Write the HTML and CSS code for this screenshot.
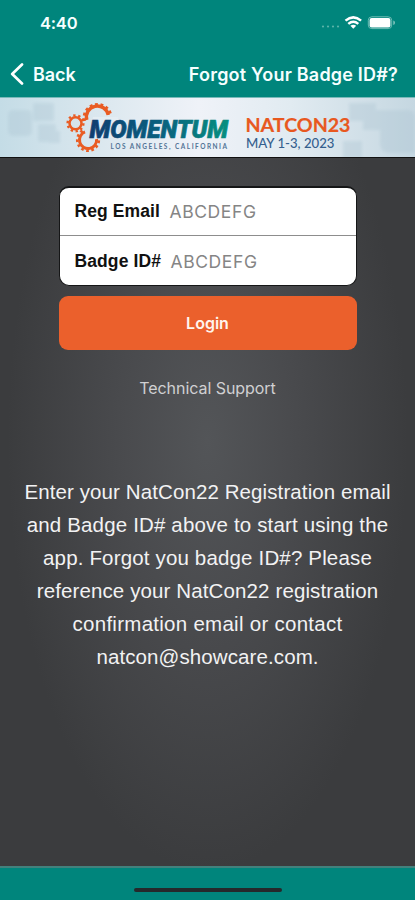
FILE: index.html
```html
<!DOCTYPE html>
<html lang="en">
<head>
<meta charset="utf-8">
<title>Forgot Your Badge ID#?</title>
<link rel="stylesheet" href="styles.css">
</head>
<body>
<div class="app">
  <header class="top">
    <div class="status">
      <span class="time">4:40</span>
      <svg class="status-icons" width="78" height="16" viewBox="0 0 78 16">
        <g fill="#5cb3a9"><circle cx="3" cy="11.5" r="1.1"/><circle cx="8" cy="11.5" r="1.1"/><circle cx="13" cy="11.5" r="1.1"/><circle cx="18" cy="11.5" r="1.1"/></g>
        <g fill="none" stroke="#fff" stroke-width="2.5"><path d="M25.500 5.600Q33.300-.9 41.100 5.600"/><path d="M28.300 8.900Q33.300 4.700 38.300 8.900"/></g>
        <path d="M30.400 10.700Q33.300 8.600 36.200 10.700L33.300 13.700Z" fill="#fff"/>
        <rect x="48.300" y="1.800" width="23.400" height="11.800" rx="3.500" fill="none" stroke="#6fbcb4"/>
        <rect x="49.600" y="3.100" width="20.800" height="9.300" rx="2" fill="#fff"/>
        <path d="M73.300 5.500Q75 6 75 7.700T73.300 9.900Z" fill="#83c5bf"/>
      </svg>
    </div>
    <nav class="nav">
      <a class="back"><svg width="14" height="22" viewBox="0 0 14 22"><path d="M12 1.500 2.200 11 12 20.500" fill="none" stroke="#fff" stroke-width="2.700" stroke-linecap="round" stroke-linejoin="round"/></svg><span>Back</span></a>
      <h1 class="title">Forgot Your Badge ID#?</h1>
    </nav>
  </header>
  <svg class="banner" width="415" height="61" viewBox="0 97 415 61">
    <defs>
      <linearGradient id="sky"><stop offset="0" stop-color="#c4dce6"/><stop offset=".25" stop-color="#dce8ef"/><stop offset=".48" stop-color="#eff2f8"/><stop offset=".7" stop-color="#e1ebf1"/><stop offset="1" stop-color="#c5d7e1"/></linearGradient>
      <linearGradient id="word" gradientUnits="userSpaceOnUse" x1="90" y1="0" x2="229" y2="0"><stop offset="0" stop-color="#103e70"/><stop offset=".5" stop-color="#09607f"/><stop offset="1" stop-color="#079080"/></linearGradient>
      <filter id="soft" x="-20%" y="-20%" width="140%" height="140%"><feGaussianBlur stdDeviation="1.500"/></filter>
    </defs>
    <rect y="97" width="415" height="61" fill="url(#sky)"/>
    <g fill="#a9c2d0" opacity=".32" filter="url(#soft)">
      <rect x="8" y="110" width="24" height="26" rx="5"/><rect x="33" y="103" width="21" height="18" rx="2"/><rect x="38" y="124" width="18" height="18" rx="3"/><rect x="49" y="131" width="11" height="12"/>
      <path d="M349 103h27v18h-27zM363 110h45q7 0 7 8v35h-25q-10 0-10-10v-13h-17zM343 141h19v17h-19z"/>
    </g>
    <path d="M0 97.500H415" stroke="#79b9b9"/>
    <g fill="none" stroke="#e95c23">
      <path d="M86.800 120A11 11 0 1 1 108.200 115" stroke-width="3.400"/><path d="M84.400 121A13.500 13.500 0 1 1 110.800 115" stroke-width="3" stroke-dasharray="2.800 2.600"/>
      <circle cx="75.500" cy="123.300" r="6" stroke-width="2.500"/><circle cx="75.500" cy="123.300" r="7.900" stroke-width="2.400" stroke-dasharray="2.300 2.663"/>
      <path d="M85 131.900A8.600 8.600 0 1 0 96.600 139" stroke-width="3"/><path d="M82.500 130.700A10.800 10.800 0 1 0 98.800 139" stroke-width="2.600" stroke-dasharray="2.600 2.620"/>
    </g>
    <path d="M93 117H118V137.500H89Z" fill="#e4edf3"/>
    <text class="momentum" x="89.500" y="137.700" textLength="138.500" lengthAdjust="spacingAndGlyphs">MOMENTUM</text>
    <text class="place" x="110.500" y="148.800" textLength="116.500">LOS ANGELES, CALIFORNIA</text>
    <text class="natcon" x="245.500" y="131.500" textLength="105" lengthAdjust="spacingAndGlyphs">NATCON23</text>
    <text class="dates" x="246" y="148" textLength="88.500" lengthAdjust="spacingAndGlyphs">MAY 1-3, 2023</text>
    <path d="M0 157.500H415" stroke="#111"/>
  </svg>
  <main class="content">
    <form class="form">
      <div class="fields">
        <label class="field"><span class="label">Reg Email</span><span class="hint">ABCDEFG</span></label>
        <label class="field"><span class="label badge">Badge ID#</span><span class="hint">ABCDEFG</span></label>
      </div>
      <button class="login" type="button">Login</button>
    </form>
    <a class="support">Technical Support</a>
    <p class="info">
      <span class="l1">Enter your NatCon22 Registration email</span>
      <span class="l2">and Badge ID# above to start using the</span>
      <span class="l3">app. Forgot you badge ID#? Please</span>
      <span class="l4">reference your NatCon22 registration</span>
      <span class="l5">confirmation email or contact</span>
      <span class="l6">natcon@showcare.com.</span>
    </p>
  </main>
  <footer class="bottom"><div class="home"></div></footer>
</div>
</body>
</html>
```
FILE: styles.css
```css
* { box-sizing: border-box; }
body { margin: 0; font-family: "Liberation Sans", Arial, sans-serif; }
.app { width: 415px; height: 900px; display: flex; flex-direction: column; overflow: hidden; }
.top { height: 97px; flex: none; background: #00857c; color: #f5ffff; font-family: Inter, sans-serif; }
.status { height: 46px; padding: 15px 17px 0 40px; display: flex; justify-content: space-between; }
.time { font-size: 16.500px; line-height: 17px; font-weight: 600; letter-spacing: -.2px; }
.nav { height: 51px; padding: 5px 17px 0 10px; display: flex; justify-content: space-between; align-items: flex-start; }
.back { display: flex; align-items: center; gap: 9px; height: 46px; font-size: 18px; font-weight: 600; letter-spacing: -.1px; }
.title { margin: 0; font-size: 18px; line-height: 47px; font-weight: 600; letter-spacing: .2px; white-space: nowrap; }
.banner { display: block; flex: none; }
.momentum { font: italic 900 26.500px Roboto, sans-serif; fill: url(#word); stroke: url(#word); stroke-width: .7px; }
.place { font: 700 6.500px Lato, sans-serif; fill: #527496; }
.natcon { font: 700 19px Lato, sans-serif; fill: #e8581f; stroke: #e8581f; stroke-width: .2px; }
.dates { font: 500 13.500px Lato, sans-serif; fill: #345f8e; }
.content { flex: 1; min-height: 0; padding: 28px 0 0; display: flex; flex-direction: column; align-items: center; background: radial-gradient(ellipse 200px 430px at 50% 40%, #535558 0%, #494a4d 45%, #3b3c3e 100%); }
.form { width: 298px; display: flex; flex-direction: column; gap: 10px; }
.fields { height: 100px; border: 1px solid #151617; border-top-width: 2px; border-radius: 10px; background: #fff; overflow: hidden; }
.field { height: 47px; padding-left: 15px; display: flex; align-items: center; gap: 10px; }
.field + .field { height: 51px; border-top: 1px solid #8d8d8d; }
.label { width: 85px; font-size: 17.500px; font-weight: 700; color: #111; white-space: nowrap; letter-spacing: .1px; }
.badge { width: 86px; }
.hint { font: 400 17.500px Inter, sans-serif; color: #858585; letter-spacing: .6px; }
.login { height: 54px; padding: 0; border: 0; border-radius: 9px; background: #eb602c; color: #fff4ed; font: 600 16px Inter, sans-serif; letter-spacing: 0; }
.support { margin-top: 27px; font-family: Inter, sans-serif; font-size: 16px; line-height: 22px; color: #d0d0d2; letter-spacing: -.05px; }
.info { margin: 76px 0 0; font-size: 20.500px; line-height: 33px; color: #f2f2f3; text-align: center; }
.info span { display: block; white-space: nowrap; }
.l1, .l6 { letter-spacing: .1px; }
.l2, .l3 { letter-spacing: .16px; }
.l4 { letter-spacing: .12px; }
.l5 { letter-spacing: .27px; }
.bottom { height: 34px; flex: none; border-top: 2px solid #43817d; background: #00857c; display: flex; justify-content: center; padding-top: 20px; }
.home { width: 148px; height: 4px; border-radius: 2px; background: #25292b; }
```
